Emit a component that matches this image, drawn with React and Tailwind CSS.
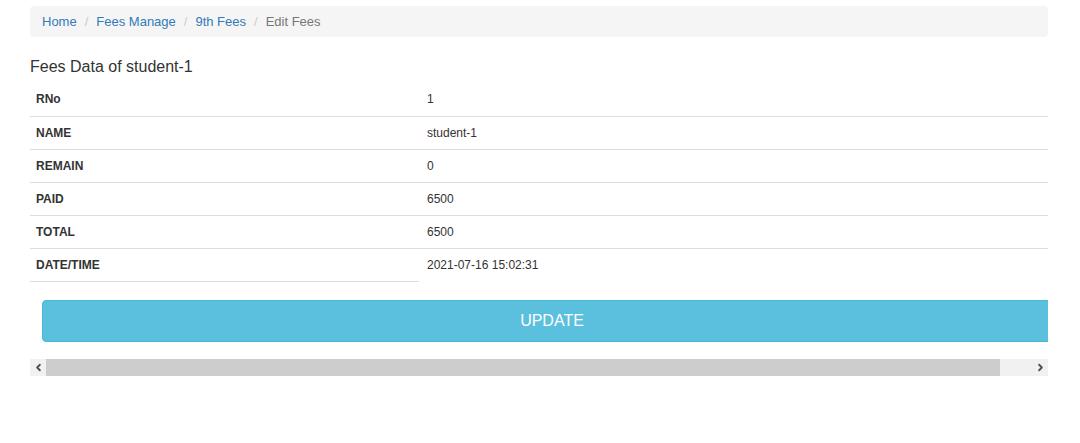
import { ChevronLeft, ChevronRight } from 'lucide-react';

const rows = [
  ['RNo', '1'],
  ['NAME', 'student-1'],
  ['REMAIN', '0'],
  ['PAID', '6500'],
  ['TOTAL', '6500'],
  ['DATE/TIME', '2021-07-16 15:02:31'],
];

const crumbs = ['Home', 'Fees Manage', '9th Fees'];

export default function App() {
  return (
    <div className="min-h-[443px] bg-white pl-[30px] pr-[32px] pt-[6px] text-[#333] font-['Liberation_Sans',Arial,sans-serif]">
      {/* Breadcrumb */}
      <ol className="flex h-[31px] items-center rounded bg-[#f5f5f5] px-3 text-[13px]">
        {crumbs.map((c) => (
          <li key={c} className="flex items-center">
            <a className="text-[#337ab7]">{c}</a>
            <span className="px-[8px] text-[#ccc]">/</span>
          </li>
        ))}
        <li className="text-[#777]">Edit Fees</li>
      </ol>

      <h4 className="mt-[20px] text-[16px] leading-[20px]">Fees Data of student-1</h4>

      {/* Scroll area */}
      <div className="mt-[6px]">
        <div className="overflow-hidden">
          <table className="w-[1100px] border-collapse text-[12px]">
            <tbody>
              {rows.map(([k, v], i) => (
                <tr key={k} className="h-[33px]">
                  <td className="w-[389px] border-b border-[#ddd] pl-[6px] font-bold">{k}</td>
                  <td className={`pl-[8px] ${i < rows.length - 1 ? 'border-b border-[#ddd]' : ''}`}>{v}</td>
                </tr>
              ))}
            </tbody>
          </table>

          <div className="ml-[12px] mt-[18px] w-[1020px]">
            <button className="h-[42px] w-full rounded border border-[#46b8da] bg-[#5bc0de] text-[16px] text-white">
              UPDATE
            </button>
          </div>
        </div>

        {/* Scrollbar */}
        <div className="mt-[17px] flex h-[17px] bg-[#f1f1f1]">
          <div className="flex w-[16px] items-center justify-center text-[#505050]">
            <ChevronLeft size={11} strokeWidth={4} />
          </div>
          <div className="w-[954px] bg-[#cdcdcd]" />
          <div className="flex-1" />
          <div className="flex w-[16px] items-center justify-center text-[#505050]">
            <ChevronRight size={11} strokeWidth={4} />
          </div>
        </div>
      </div>
    </div>
  );
}
